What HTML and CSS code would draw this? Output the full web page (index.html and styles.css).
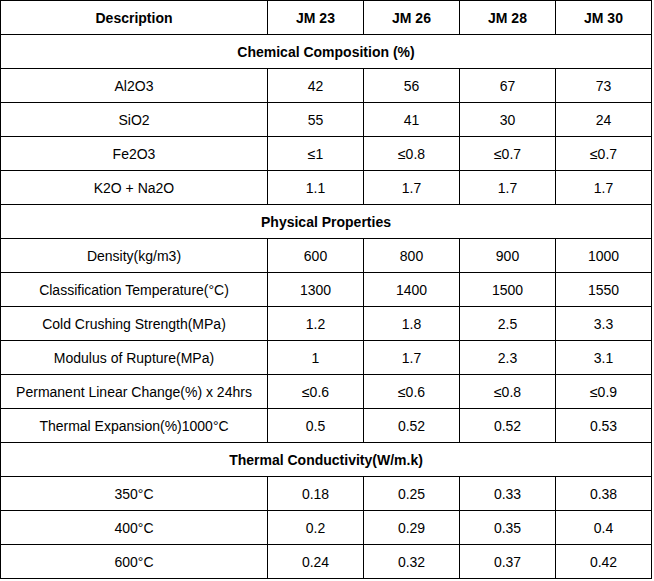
FILE: index.html
```html
<!DOCTYPE html>
<html>
<head>
<meta charset="utf-8">
<link rel="stylesheet" href="styles.css">
</head>
<body>
<table class="spec">
  <colgroup>
    <col class="c-desc"><col class="c-val"><col class="c-val"><col class="c-val"><col class="c-val">
  </colgroup>
  <tr class="head"><td>Description</td><td>JM 23</td><td>JM 26</td><td>JM 28</td><td>JM 30</td></tr>
  <tr class="section"><td colspan="5">Chemical Composition (%)</td></tr>
  <tr><td>Al2O3</td><td>42</td><td>56</td><td>67</td><td>73</td></tr>
  <tr><td>SiO2</td><td>55</td><td>41</td><td>30</td><td>24</td></tr>
  <tr><td>Fe2O3</td><td>≤1</td><td>≤0.8</td><td>≤0.7</td><td>≤0.7</td></tr>
  <tr><td>K2O + Na2O</td><td>1.1</td><td>1.7</td><td>1.7</td><td>1.7</td></tr>
  <tr class="section"><td colspan="5">Physical Properties</td></tr>
  <tr><td>Density(kg/m3)</td><td>600</td><td>800</td><td>900</td><td>1000</td></tr>
  <tr><td>Classification Temperature(°C)</td><td>1300</td><td>1400</td><td>1500</td><td>1550</td></tr>
  <tr><td>Cold Crushing Strength(MPa)</td><td>1.2</td><td>1.8</td><td>2.5</td><td>3.3</td></tr>
  <tr><td>Modulus of Rupture(MPa)</td><td>1</td><td>1.7</td><td>2.3</td><td>3.1</td></tr>
  <tr><td>Permanent Linear Change(%) x 24hrs</td><td>≤0.6</td><td>≤0.6</td><td>≤0.8</td><td>≤0.9</td></tr>
  <tr><td>Thermal Expansion(%)1000°C</td><td>0.5</td><td>0.52</td><td>0.52</td><td>0.53</td></tr>
  <tr class="section"><td colspan="5">Thermal Conductivity(W/m.k)</td></tr>
  <tr><td>350°C</td><td>0.18</td><td>0.25</td><td>0.33</td><td>0.38</td></tr>
  <tr><td>400°C</td><td>0.2</td><td>0.29</td><td>0.35</td><td>0.4</td></tr>
  <tr><td>600°C</td><td>0.24</td><td>0.32</td><td>0.37</td><td>0.42</td></tr>
</table>
</body>
</html>
```
FILE: styles.css
```css
html, body {
  margin: 0;
  padding: 0;
  background: #fff;
}
body {
  font-family: "Liberation Sans", Arial, sans-serif;
  font-size: 14px;
  color: #000;
}
.spec {
  border-collapse: collapse;
  table-layout: fixed;
  width: 652px;
}
.c-desc { width: 267px; }
.c-val { width: 96px; }
.spec td {
  border: 1px solid #000;
  height: 33px;
  padding: 0;
  text-align: center;
  vertical-align: middle;
  line-height: 16px;
}
.head td, .section td {
  font-weight: bold;
}
```
